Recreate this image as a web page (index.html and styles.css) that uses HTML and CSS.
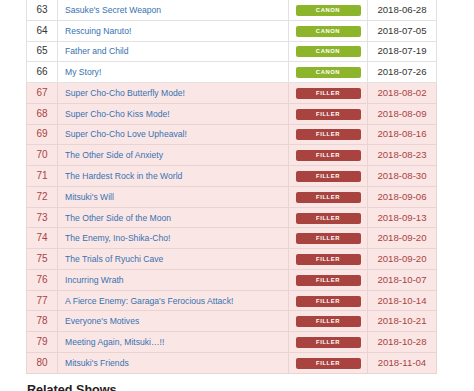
FILE: index.html
```html
<!DOCTYPE html>
<html>
<head>
<meta charset="utf-8">
<link rel="stylesheet" href="styles.css">
</head>
<body>
<div class="wrap">
<table class="eps">
<colgroup><col class="c-num"><col class="c-title"><col class="c-type"><col class="c-date"></colgroup>
<tbody>
<tr class="canon"><td class="num">63</td><td class="title"><a href="#">Sasuke's Secret Weapon</a></td><td class="type"><span class="badge">CANON</span></td><td class="date">2018-06-28</td></tr>
<tr class="canon"><td class="num">64</td><td class="title"><a href="#">Rescuing Naruto!</a></td><td class="type"><span class="badge">CANON</span></td><td class="date">2018-07-05</td></tr>
<tr class="canon"><td class="num">65</td><td class="title"><a href="#">Father and Child</a></td><td class="type"><span class="badge">CANON</span></td><td class="date">2018-07-19</td></tr>
<tr class="canon"><td class="num">66</td><td class="title"><a href="#">My Story!</a></td><td class="type"><span class="badge">CANON</span></td><td class="date">2018-07-26</td></tr>
<tr class="filler"><td class="num">67</td><td class="title"><a href="#">Super Cho-Cho Butterfly Mode!</a></td><td class="type"><span class="badge">FILLER</span></td><td class="date">2018-08-02</td></tr>
<tr class="filler"><td class="num">68</td><td class="title"><a href="#">Super Cho-Cho Kiss Mode!</a></td><td class="type"><span class="badge">FILLER</span></td><td class="date">2018-08-09</td></tr>
<tr class="filler"><td class="num">69</td><td class="title"><a href="#">Super Cho-Cho Love Upheaval!</a></td><td class="type"><span class="badge">FILLER</span></td><td class="date">2018-08-16</td></tr>
<tr class="filler"><td class="num">70</td><td class="title"><a href="#">The Other Side of Anxiety</a></td><td class="type"><span class="badge">FILLER</span></td><td class="date">2018-08-23</td></tr>
<tr class="filler"><td class="num">71</td><td class="title"><a href="#">The Hardest Rock in the World</a></td><td class="type"><span class="badge">FILLER</span></td><td class="date">2018-08-30</td></tr>
<tr class="filler"><td class="num">72</td><td class="title"><a href="#">Mitsuki's Will</a></td><td class="type"><span class="badge">FILLER</span></td><td class="date">2018-09-06</td></tr>
<tr class="filler"><td class="num">73</td><td class="title"><a href="#">The Other Side of the Moon</a></td><td class="type"><span class="badge">FILLER</span></td><td class="date">2018-09-13</td></tr>
<tr class="filler"><td class="num">74</td><td class="title"><a href="#">The Enemy, Ino-Shika-Cho!</a></td><td class="type"><span class="badge">FILLER</span></td><td class="date">2018-09-20</td></tr>
<tr class="filler"><td class="num">75</td><td class="title"><a href="#">The Trials of Ryuchi Cave</a></td><td class="type"><span class="badge">FILLER</span></td><td class="date">2018-09-20</td></tr>
<tr class="filler"><td class="num">76</td><td class="title"><a href="#">Incurring Wrath</a></td><td class="type"><span class="badge">FILLER</span></td><td class="date">2018-10-07</td></tr>
<tr class="filler"><td class="num">77</td><td class="title"><a href="#">A Fierce Enemy: Garaga's Ferocious Attack!</a></td><td class="type"><span class="badge">FILLER</span></td><td class="date">2018-10-14</td></tr>
<tr class="filler"><td class="num">78</td><td class="title"><a href="#">Everyone's Motives</a></td><td class="type"><span class="badge">FILLER</span></td><td class="date">2018-10-21</td></tr>
<tr class="filler"><td class="num">79</td><td class="title"><a href="#">Meeting Again, Mitsuki…!!</a></td><td class="type"><span class="badge">FILLER</span></td><td class="date">2018-10-28</td></tr>
<tr class="filler"><td class="num">80</td><td class="title"><a href="#">Mitsuki's Friends</a></td><td class="type"><span class="badge">FILLER</span></td><td class="date">2018-11-04</td></tr>
</tbody>
</table>
<h2 class="related">Related Shows</h2>
</div>
</body>
</html>
```

FILE: styles.css
```css
html, body {
  margin: 0;
  padding: 0;
  background: #fff;
}
body {
  font-family: "Liberation Sans", Arial, Helvetica, sans-serif;
  color: #333;
}
.wrap {
  padding: 0 38px 0 26px;
}
.eps {
  border-collapse: collapse;
  width: 410px;
  margin-top: -1px;
  table-layout: fixed;
}
.c-num { width: 31px; }
.c-title { width: 231px; }
.c-type { width: 79px; }
.c-date { width: 69px; }
.eps td {
  border: 1px solid #e2e2e2;
  height: 19.78px;
  padding: 0;
  vertical-align: middle;
  font-size: 9.6px;
  line-height: 12px;
}
.eps td.num {
  text-align: center;
  font-size: 10px;
}
.eps td.title {
  padding-left: 7px;
  font-size: 8.6px;
  white-space: nowrap;
  overflow: hidden;
}
.eps td.type {
  text-align: center;
}
.eps td.date {
  text-align: center;
}
.title a {
  color: #3672b0;
  text-decoration: none;
}
.badge {
  display: inline-block;
  width: 65px;
  height: 11px;
  line-height: 11px;
  border-radius: 2px;
  font-size: 5.8px;
  font-weight: bold;
  letter-spacing: 0.6px;
  color: #fff;
  text-align: center;
  vertical-align: middle;
}
.canon .badge {
  background: #8db52c;
}
.filler .badge {
  background: #a8433f;
}
.filler td {
  background: #fbe6e6;
  border-color: #ead3d3;
}
.filler td.num, .filler td.date {
  color: #a8433f;
}
.related {
  margin: 8px 0 0 1px;
  font-size: 12.6px;
  font-weight: bold;
  color: #222;
  line-height: 16px;
}
```
